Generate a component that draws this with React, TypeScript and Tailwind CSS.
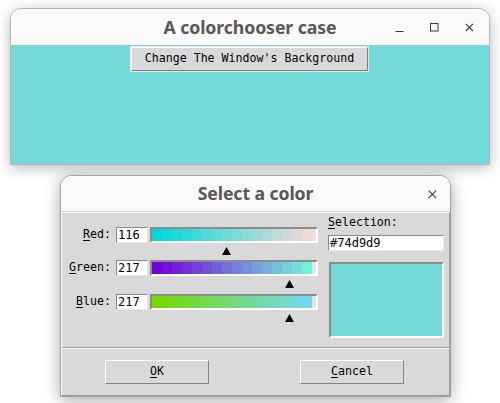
import React from 'react';

const STEPS = Array.from({ length: 16 }, (_, i) => i * 16);

const sliders = [
  { key: 'r', first: 'R', rest: 'ed:', value: 116, color: (l: number) => `rgb(${l},217,217)` },
  { key: 'g', first: 'G', rest: 'reen:', value: 217, color: (l: number) => `rgb(116,${l},217)` },
  { key: 'b', first: 'B', rest: 'lue:', value: 217, color: (l: number) => `rgb(116,217,${l})` },
];

const TkButton = ({ first, rest, className = '' }: { first: string; rest: string; className?: string }) => (
  <div
    className={`flex items-center justify-center bg-[#d9d9d9] border border-t-white border-l-white border-b-[#848484] border-r-[#848484] text-[11.6px] text-black ${className}`}
  >
    <span className="underline underline-offset-2">{first}</span>
    <span>{rest}</span>
  </div>
);

const App = () => {
  return (
    <div className="w-[500px] h-[403px] bg-white pt-[8px] pl-[10px] overflow-hidden font-['DejaVu_Sans_Mono','Liberation_Mono',monospace]">
      {/* main window */}
      <div className="w-[480px] h-[157px] flex flex-col border border-[#b4b4b4] rounded-t-[11px] overflow-hidden shadow-[0_3px_14px_rgba(0,0,0,0.28)]">
        <div className="relative h-[36px] shrink-0 bg-[#fafafa] flex items-center justify-center">
          <span className="font-['Noto_Sans','Open_Sans',sans-serif] font-bold text-[17.7px] text-[#5c5854] tracking-[-0.1px]">
            A colorchooser case
          </span>
          <div className="absolute right-[15px] top-[13px] flex items-center gap-[26px]">
            <svg width="9" height="10" viewBox="0 0 9 10">
              <path d="M0.5 9.5 H8.5" stroke="#3a3a3a" strokeWidth="1" />
            </svg>
            <svg width="9" height="10" viewBox="0 0 9 10">
              <rect x="0.5" y="1.5" width="7.5" height="7.5" fill="none" stroke="#3a3a3a" strokeWidth="1" />
            </svg>
            <svg width="9" height="10" viewBox="0 0 9 10">
              <path d="M0.8 1.8 L8 9 M8 1.8 L0.8 9" stroke="#3a3a3a" strokeWidth="1.1" />
            </svg>
          </div>
        </div>
        <div className="flex-1 bg-[#74d9d9] flex justify-center pt-[1px] pr-[1px]">
          <div className="h-[26px] w-[239px] bg-[#e6e6e6] p-[1px]">
            <div className="h-full w-full flex items-center justify-center bg-[#d9d9d9] border border-t-white border-l-white border-b-[#7e7e7e] border-r-[#7e7e7e] text-[11.6px] text-black">
              Change The Window's Background
            </div>
          </div>
        </div>
      </div>

      {/* color dialog */}
      <div className="mt-[10px] ml-[50px] w-[391px] h-[222px] flex flex-col border border-[#a2a2a2] rounded-t-[11px] overflow-hidden shadow-[0_3px_16px_rgba(0,0,0,0.35)]">
        <div className="relative h-[36px] shrink-0 bg-[#fafafa] border-b border-[#d2d2d2] flex items-center justify-center">
          <span className="font-['Noto_Sans','Open_Sans',sans-serif] font-bold text-[17.7px] text-[#5c5854] tracking-[-0.1px]">
            Select a color
          </span>
          <svg className="absolute right-[13px] top-[14px]" width="9" height="9" viewBox="0 0 9 9">
            <path d="M0.6 0.6 L8.2 8.2 M8.2 0.6 L0.6 8.2" stroke="#3a3a3a" strokeWidth="1.1" />
          </svg>
        </div>

        {/* top frame */}
        <div className="h-[136px] shrink-0 bg-[#d9d9d9] border border-t-white border-l-white border-b-[#9a9a9a] border-r-[#9a9a9a] flex pt-[14px]">
          <div className="flex flex-col">
            {sliders.map((s, idx) => (
              <div key={s.key} className={`flex items-start ${idx === 1 ? 'h-[34px]' : 'h-[33px]'}`}>
                <div className="w-[49px] h-[16px] flex items-center justify-end text-[11.6px] text-black">
                  <span className="underline underline-offset-2">{s.first}</span>
                  <span>{s.rest}</span>
                </div>
                <div className="ml-[5px] w-[32px] h-[16px] bg-white border border-t-[#8a8a8a] border-l-[#8a8a8a] border-b-[#e8e8e8] border-r-[#e8e8e8] flex items-center pl-[1px] text-[12px] leading-none text-black">
                  {s.value}
                </div>
                <div className="relative ml-[2px] w-[168px] h-[30px]">
                  <div className="h-[16px] w-full bg-[#e4e4e4] border-2 border-t-[#8c8c8c] border-l-[#8c8c8c] border-b-white border-r-white flex">
                    {STEPS.map((l) => (
                      <div key={l} className="w-[10px] h-full" style={{ background: s.color(l) }} />
                    ))}
                  </div>
                  <svg
                    className="absolute top-[20px]"
                    style={{ left: 3 + (s.value * 160) / 255 - 4 }}
                    width="9"
                    height="8"
                    viewBox="0 0 9 8"
                  >
                    <path d="M4.5 0 L9 8 L0 8 Z" fill="#000" />
                  </svg>
                </div>
              </div>
            ))}
          </div>
          <div className="ml-[10px] w-[116px] flex flex-col">
            <div className="h-[16px] -mt-[12px] flex items-center text-[11.6px] text-black">
              <span className="underline underline-offset-2">S</span>
              <span>election:</span>
            </div>
            <div className="mt-[4px] h-[16px] w-[116px] bg-white border border-t-[#8a8a8a] border-l-[#8a8a8a] border-b-[#e8e8e8] border-r-[#e8e8e8] flex items-center pl-[1px] text-[12px] leading-none text-black">
              #74d9d9
            </div>
            <div className="mt-[11px] ml-[1px] w-[115px] h-[76px] bg-[#74d9d9] border-2 border-t-[#8c8c8c] border-l-[#8c8c8c] border-b-white border-r-white" />
          </div>
        </div>

        {/* bottom frame */}
        <div className="flex-1 bg-[#d9d9d9] border border-t-white border-l-white border-b-[#9a9a9a] border-r-[#9a9a9a] flex items-start justify-between pt-[11px] pl-[43px] pr-[45px]">
          <TkButton first="O" rest="K" className="w-[104px] h-[24px]" />
          <TkButton first="C" rest="ancel" className="w-[104px] h-[24px]" />
        </div>
      </div>
    </div>
  );
};

export default App;
